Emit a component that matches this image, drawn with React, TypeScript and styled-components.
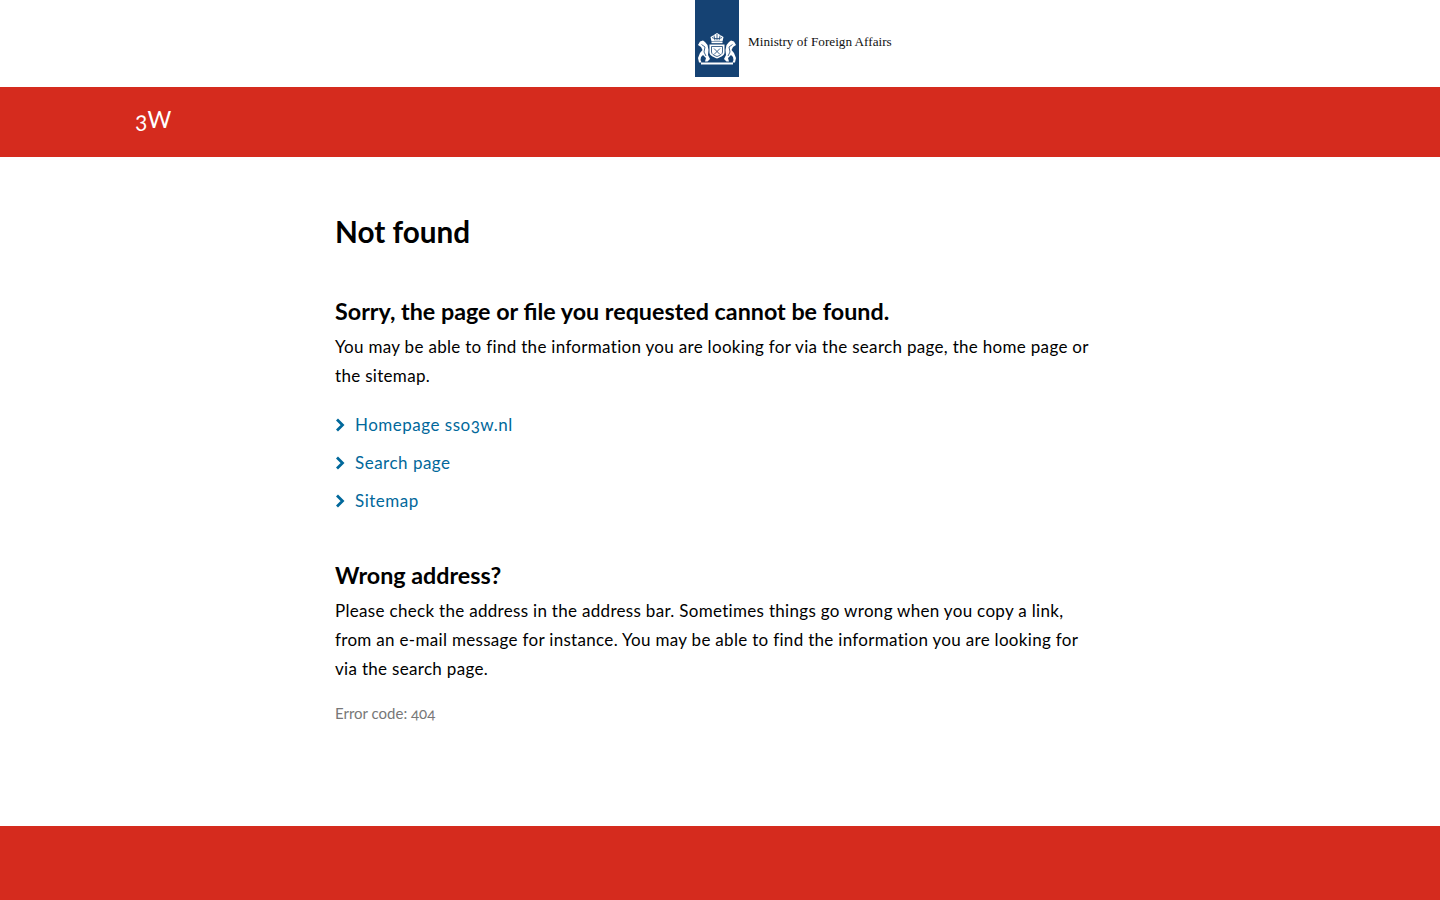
import React from 'react';
import styled, { createGlobalStyle } from 'styled-components';

const GlobalStyle = createGlobalStyle`
  html, body {
    margin: 0;
    padding: 0;
    background: #fff;
  }
  body {
    font-family: Lato, 'Noto Sans', sans-serif;
    color: #000;
  }
`;

const Page = styled.div`
  min-height: 900px;
  display: flex;
  flex-direction: column;
`;

const LogoBar = styled.header`
  height: 87px;
  padding-left: 695px;
  display: flex;
  align-items: flex-start;
  gap: 9px;
`;

const LogoBlock = styled.div`
  width: 44px;
  height: 77px;
  background: #154273;
`;

const Ministry = styled.div`
  font-family: 'Liberation Serif', serif;
  font-size: 13.2px;
  line-height: 14px;
  margin-top: 35px;
  color: #111;
`;

const Banner = styled.div`
  height: 70px;
  background: #d52b1e;
  padding: 17px 0 0 135px;
  box-sizing: border-box;
`;

const SiteName = styled.div`
  color: #fff;
  font-size: 23px;
  line-height: 30px;
  font-weight: 400;
  font-feature-settings: 'onum';
`;

const Main = styled.main`
  flex: 1;
  width: 760px;
  margin-left: 335px;
  padding-top: 57px;
`;

const Title = styled.h1`
  font-size: 29.7px;
  line-height: 36px;
  font-weight: 700;
  margin: 0 0 46px;
`;

const Heading = styled.h2`
  font-size: 23.3px;
  line-height: 30px;
  font-weight: 700;
  margin: 0 0 6px;
`;

const Para = styled.p`
  font-size: 17px;
  line-height: 29px;
  letter-spacing: 0.31px;
  margin: 0;
`;

const LinkList = styled.ul`
  list-style: none;
  margin: 22px 0 46px;
  padding: 0;
  display: flex;
  flex-direction: column;
  gap: 12px;
`;

const LinkRow = styled.li`
  display: flex;
  align-items: center;
  gap: 10px;
  height: 26px;
`;

const ItemLink = styled.a`
  color: #01689b;
  font-size: 17px;
  line-height: 26px;
  letter-spacing: 0.5px;
  text-decoration: none;
  font-feature-settings: 'onum';
`;

const ErrorCode = styled.p`
  font-size: 15px;
  line-height: 20px;
  color: #777;
  margin: 20px 0 0;
  font-feature-settings: 'onum';
`;

const Footer = styled.footer`
  height: 74px;
  background: #d52b1e;
`;

const Chevron = () => (
  <svg width="10" height="14" viewBox="0 0 10 14" aria-hidden="true">
    <path d="M2 1.5 7.500 7 2 12.500" fill="none" stroke="#01689b" strokeWidth="2.8" />
  </svg>
);

const CoatOfArms = () => (
  <svg width="44" height="77" viewBox="0 0 44 77" aria-hidden="true">
    <g fill="#fff">
      <path d="M16.500 41.500 15.500 37 18 35.500 22 33 26 35.500 28.500 37 27.500 41.500Z" />
      <rect x="16.500" y="42" width="11" height="1.200" />
      <path d="M14.500 44.500h15v8c0 3-3.500 4.500-7.500 6-4-1.500-7.500-3-7.500-6Z" />
      <path d="M5 41.500 8 40.500 10 42 12.500 45 13.500 50 13 55 15 59 12.500 61.500H10L11 58 8 55 6 57 5.500 60 6.500 62.500H4L3 58 5 53 7.500 50 6 47 3 45Z" />
      <path d="M39 41.500 36 40.500 34 42 31.500 45 30.500 50 31 55 29 59 31.500 61.500H34L33 58 36 55 38 57 38.500 60 37.500 62.500H40L41 58 39 53 36.500 50 38 47 41 45Z" />
      <path d="M6 62.500h32v2H6Z" />
    </g>
    <g fill="none" stroke="#154273" strokeWidth="0.8">
      <path d="M17 37.500c2 1.500 8 1.500 10 0M19 35.500l1 5M25 35.500l-1 5M22 34v6.500" />
      <path d="M6.500 44.500 10 47 9 52 11 56M37.500 44.500 34 47 35 52 33 56" />
      <path d="M16.500 46.500h11v5.500c0 2-2.500 3.500-5.500 4.500-3-1-5.500-2.500-5.500-4.500Z" />
      <path d="M19 48.500l6 6M25 48.500l-6 6" />
    </g>
  </svg>
);

const App = () => (
  <Page>
    <GlobalStyle />
    <LogoBar>
      <LogoBlock>
        <CoatOfArms />
      </LogoBlock>
      <Ministry>Ministry of Foreign Affairs</Ministry>
    </LogoBar>
    <Banner>
      <SiteName>3W</SiteName>
    </Banner>
    <Main>
      <Title>Not found</Title>
      <Heading>Sorry, the page or file you requested cannot be found.</Heading>
      <Para>
        You may be able to find the information you are looking for via the search page, the home page or the sitemap.
      </Para>
      <LinkList>
        <LinkRow>
          <Chevron />
          <ItemLink href="#">Homepage sso3w.nl</ItemLink>
        </LinkRow>
        <LinkRow>
          <Chevron />
          <ItemLink href="#">Search page</ItemLink>
        </LinkRow>
        <LinkRow>
          <Chevron />
          <ItemLink href="#">Sitemap</ItemLink>
        </LinkRow>
      </LinkList>
      <Heading>Wrong address?</Heading>
      <Para>
        Please check the address in the address bar. Sometimes things go wrong when you copy a link, from an e-mail
        message for instance. You may be able to find the information you are looking for via the search page.
      </Para>
      <ErrorCode>Error code: 404</ErrorCode>
    </Main>
    <Footer />
  </Page>
);

export default App;
